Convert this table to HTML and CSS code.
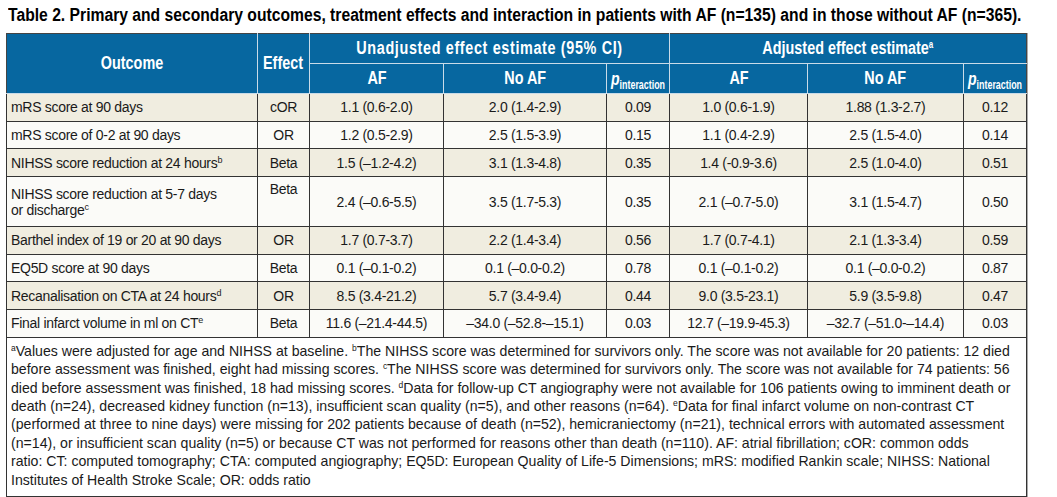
FILE: index.html
```html
<!DOCTYPE html>
<html>
<head>
<meta charset="utf-8">
<link rel="stylesheet" href="styles.css">
</head>
<body>
<div class="page">
<h1 class="title"><span class="title-text">Table 2. Primary and secondary outcomes, treatment effects and interaction in patients with AF (n=135) and in those without AF (n=365).</span></h1>
<table class="tbl">
<colgroup>
<col class="c-out"><col class="c-eff"><col class="c-af1"><col class="c-no1"><col class="c-p"><col class="c-af2"><col class="c-no2"><col class="c-p">
</colgroup>
<thead>
<tr class="h1">
<th rowspan="2"><span class="hd">Outcome</span></th>
<th rowspan="2"><span class="hd">Effect</span></th>
<th colspan="3"><span class="hd wide">Unadjusted effect estimate (95% CI)</span></th>
<th colspan="3"><span class="hd">Adjusted effect estimate<sup>a</sup></span></th>
</tr>
<tr class="h2">
<th><span class="hd">AF</span></th><th><span class="hd">No AF</span></th><th class="pcell"><span class="hd"><i>p</i><sub>interaction</sub></span></th>
<th><span class="hd">AF</span></th><th><span class="hd">No AF</span></th><th class="pcell"><span class="hd"><i>p</i><sub>interaction</sub></span></th>
</tr>
</thead>
<tbody>
<tr class="r odd"><td class="out">mRS score at 90 days</td><td>cOR</td><td>1.1 (0.6-2.0)</td><td>2.0 (1.4-2.9)</td><td>0.09</td><td>1.0 (0.6-1.9)</td><td>1.88 (1.3-2.7)</td><td>0.12</td></tr>
<tr class="r even"><td class="out">mRS score of 0-2 at 90 days</td><td>OR</td><td>1.2 (0.5-2.9)</td><td>2.5 (1.5-3.9)</td><td>0.15</td><td>1.1 (0.4-2.9)</td><td>2.5 (1.5-4.0)</td><td>0.14</td></tr>
<tr class="r odd"><td class="out">NIHSS score reduction at 24 hours<sup>b</sup></td><td>Beta</td><td>1.5 (–1.2-4.2)</td><td>3.1 (1.3-4.8)</td><td>0.35</td><td>1.4 (-0.9-3.6)</td><td>2.5 (1.0-4.0)</td><td>0.51</td></tr>
<tr class="r2 even"><td class="out">NIHSS score reduction at 5-7 days<br>or discharge<sup>c</sup></td><td class="top">Beta</td><td>2.4 (–0.6-5.5)</td><td>3.5 (1.7-5.3)</td><td>0.35</td><td>2.1 (–0.7-5.0)</td><td>3.1 (1.5-4.7)</td><td>0.50</td></tr>
<tr class="r odd"><td class="out">Barthel index of 19 or 20 at 90 days</td><td>OR</td><td>1.7 (0.7-3.7)</td><td>2.2 (1.4-3.4)</td><td>0.56</td><td>1.7 (0.7-4.1)</td><td>2.1 (1.3-3.4)</td><td>0.59</td></tr>
<tr class="r even"><td class="out">EQ5D score at 90 days</td><td>Beta</td><td>0.1 (–0.1-0.2)</td><td>0.1 (–0.0-0.2)</td><td>0.78</td><td>0.1 (–0.1-0.2)</td><td>0.1 (–0.0-0.2)</td><td>0.87</td></tr>
<tr class="r odd"><td class="out">Recanalisation on CTA at 24 hours<sup>d</sup></td><td>OR</td><td>8.5 (3.4-21.2)</td><td>5.7 (3.4-9.4)</td><td>0.44</td><td>9.0 (3.5-23.1)</td><td>5.9 (3.5-9.8)</td><td>0.47</td></tr>
<tr class="r even"><td class="out">Final infarct volume in ml on CT<sup>e</sup></td><td>Beta</td><td>11.6 (–21.4-44.5)</td><td>–34.0 (–52.8-–15.1)</td><td>0.03</td><td>12.7 (–19.9-45.3)</td><td>–32.7 (–51.0-–14.4)</td><td>0.03</td></tr>
<tr class="foot"><td colspan="8"><div class="fn"><sup>a</sup>Values were adjusted for age and NIHSS at baseline. <sup>b</sup>The NIHSS score was determined for survivors only. The score was not available for 20 patients: 12 died<br>before assessment was finished, eight had missing scores. <sup>c</sup>The NIHSS score was determined for survivors only. The score was not available for 74 patients: 56<br>died before assessment was finished, 18 had missing scores. <sup>d</sup>Data for follow-up CT angiography were not available for 106 patients owing to imminent death or<br>death (n=24), decreased kidney function (n=13), insufficient scan quality (n=5), and other reasons (n=64). <sup>e</sup>Data for final infarct volume on non-contrast CT<br>(performed at three to nine days) were missing for 202 patients because of death (n=52), hemicraniectomy (n=21), technical errors with automated assessment<br>(n=14), or insufficient scan quality (n=5) or because CT was not performed for reasons other than death (n=110). AF: atrial fibrillation; cOR: common odds<br>ratio: CT: computed tomography; CTA: computed angiography; EQ5D: European Quality of Life-5 Dimensions; mRS: modified Rankin scale; NIHSS: National<br>Institutes of Health Stroke Scale; OR: odds ratio</div></td></tr>
</tbody>
</table>
</div>
</body>
</html>
```
FILE: styles.css
```css
html, body {
  margin: 0;
  padding: 0;
  background: #ffffff;
}
.page {
  padding: 4px 0 0 6px;
  width: 1022px;
}
.title {
  margin: 0 0 0 2px;
  font-family: "Liberation Sans", Arial, sans-serif;
  font-weight: bold;
  font-size: 18px;
  line-height: 22px;
  height: 29px;
  color: #000;
  white-space: nowrap;
  overflow: hidden;
}
.title-text {
  display: inline-block;
  transform: scaleX(0.871);
  transform-origin: 0 0;
}
.tbl {
  border-collapse: collapse;
  table-layout: fixed;
  width: 1020px;
  border: 1px solid #444;
  box-shadow: 1px 0 0 #aaa;
  font-family: "Liberation Sans", Arial, sans-serif;
  font-size: 14px;
  letter-spacing: -0.3px;
  color: #1a1a1a;
}
.c-out { width: 251px; }
.c-eff { width: 52px; }
.c-af1 { width: 134px; }
.c-no1 { width: 163px; }
.c-p { width: 63px; }
.c-af2 { width: 138px; }
.c-no2 { width: 156px; }
.tbl th {
  background: #0767a0;
  color: #fff;
  font-family: "Liberation Sans", Arial, sans-serif;
  font-weight: bold;
  font-size: 18px;
  letter-spacing: 0;
  border: 1px solid #c9dbe8;
  padding: 0;
  text-align: center;
  vertical-align: middle;
  white-space: nowrap;
}
.hd {
  display: inline-block;
  transform: scaleX(0.8);
  transform-origin: 50% 50%;
}
.hd.wide {
  letter-spacing: 0.8px;
}
.tbl thead tr:first-child th { border-top-color: #444; }
.tbl thead th:first-child { border-left-color: #444; }
.tbl thead tr.h1 th:last-child,
.tbl thead tr.h2 th:last-child { border-right-color: #444; }
.h1 { height: 30px; }
.h2 { height: 30px; }
.tbl th sup {
  font-size: 10px;
  vertical-align: 6px;
  line-height: 0;
}
.tbl th.pcell {
  text-align: left;
  padding-left: 4px;
}
.pcell .hd {
  transform: scaleX(0.74);
  transform-origin: 0 50%;
}
.pcell i {
  font-size: 19px;
}
.pcell sub {
  font-size: 12px;
  vertical-align: -4px;
  line-height: 0;
}
.tbl td {
  border: 1px solid #333;
  padding: 0 4px;
  text-align: center;
  vertical-align: middle;
  white-space: nowrap;
}
.tbl td.out {
  text-align: left;
  padding-left: 4px;
}
.r { height: 27.7px; }
.r2 { height: 50px; }
.r2 td.top { vertical-align: top; padding-top: 4px; }
.odd td { background: #f0ede0; }
.even td { background: #fbfbf8; }
.tbl td sup {
  font-size: 9px;
  vertical-align: 5px;
  line-height: 0;
}
.foot td {
  background: #fff;
  text-align: left;
  vertical-align: top;
  height: 158px;
  padding: 0 4px;
  overflow: hidden;
}
.fn {
  font-family: "Liberation Sans", Arial, sans-serif;
  font-size: 15px;
  letter-spacing: 0;
  line-height: 18.4px;
  color: #1a1a1a;
  white-space: nowrap;
  padding-top: 4px;
  width: 1012px;
  transform: scaleX(0.941);
  transform-origin: 0 0;
}
.fn sup {
  font-size: 10px;
  vertical-align: 5px;
  line-height: 0;
}
```
